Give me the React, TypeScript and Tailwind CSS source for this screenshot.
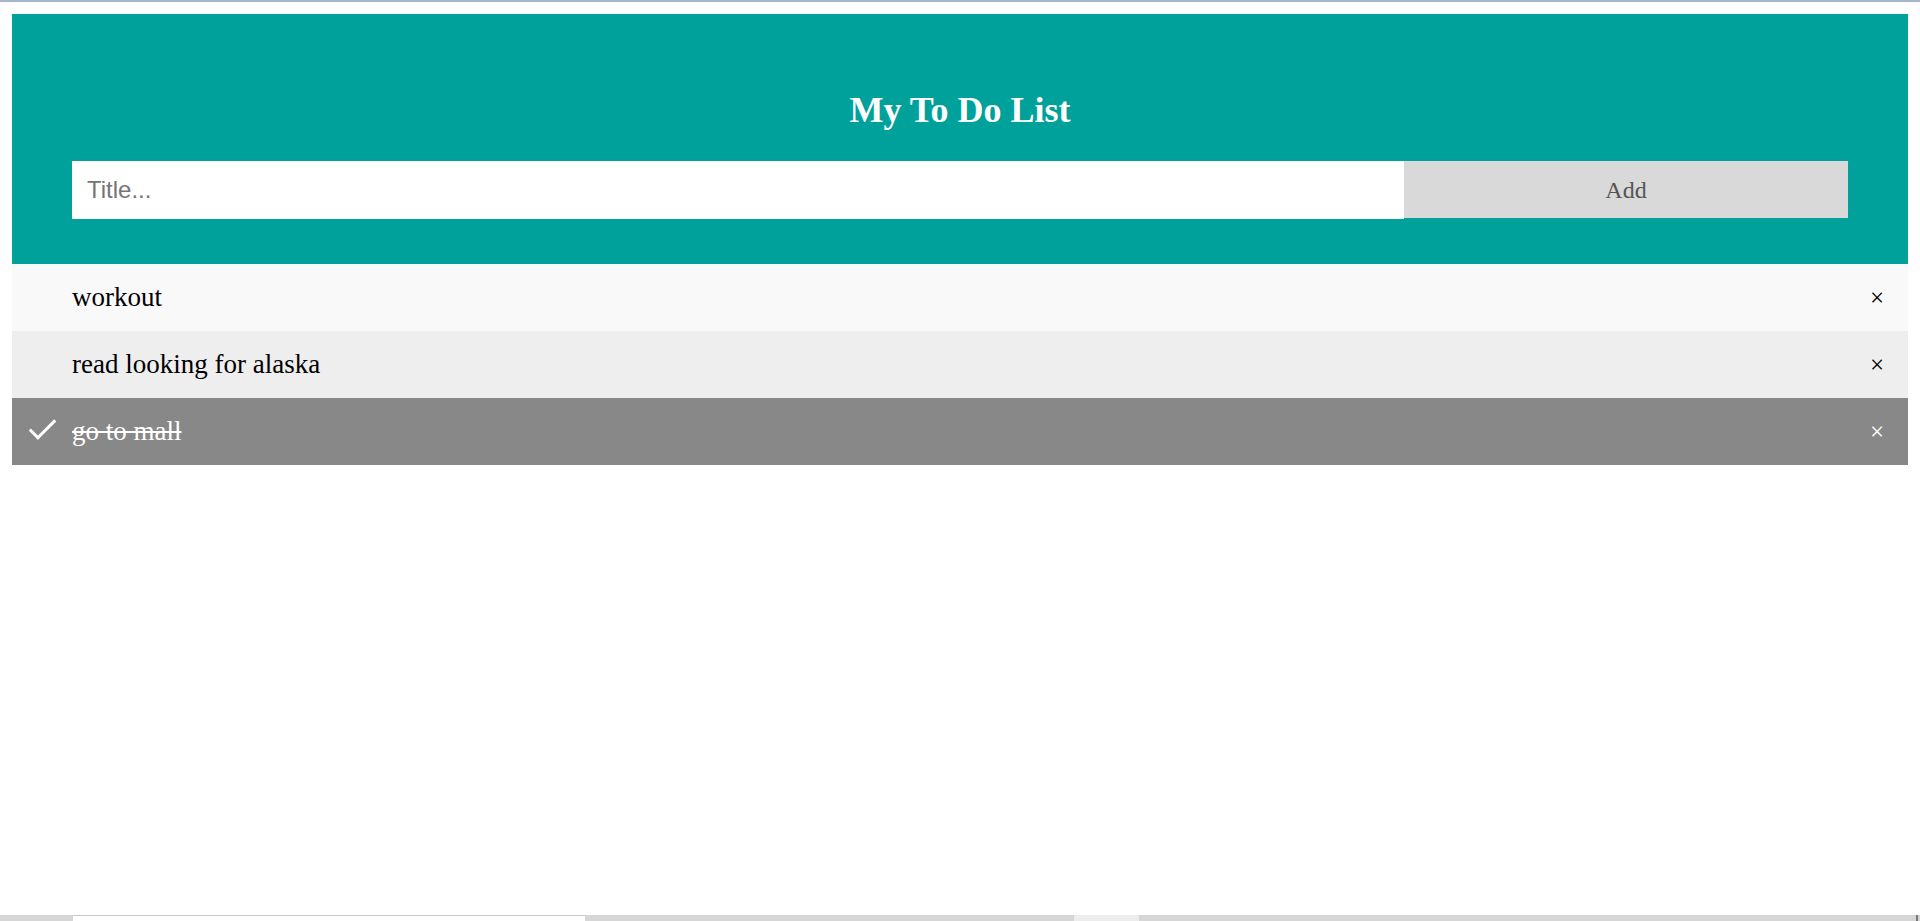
import { useState } from 'react'

type Todo = { id: number; title: string; done: boolean }

const initial: Todo[] = [
  { id: 1, title: 'workout', done: false },
  { id: 2, title: 'read looking for alaska', done: false },
  { id: 3, title: 'go to mall', done: true },
]

export default function App() {
  const [todos, setTodos] = useState<Todo[]>(initial)
  const [text, setText] = useState('')

  const add = () => {
    if (!text.trim()) return
    setTodos(t => [...t, { id: Date.now(), title: text.trim(), done: false }])
    setText('')
  }

  const toggle = (id: number) =>
    setTodos(t => t.map(x => (x.id === id ? { ...x, done: !x.done } : x)))

  const remove = (id: number) => setTodos(t => t.filter(x => x.id !== id))

  return (
    <div className="h-[921px] flex flex-col bg-white font-['Liberation_Serif',serif] overflow-hidden">
      <div className="h-[2px] bg-[#a7b4cb] shrink-0" />

      <main className="flex-1 px-[12px] pt-[12px]">
        <div className="bg-[#00a19b] px-[60px] py-[45px] text-center text-white">
          <h2 className="my-[30px] text-[36px] leading-[42px] font-bold">My To Do List</h2>
          <div className="flex items-start">
            <input
              value={text}
              onChange={e => setText(e.target.value)}
              onKeyDown={e => e.key === 'Enter' && add()}
              placeholder="Title..."
              className="w-3/4 h-[58px] px-[15px] py-[15px] bg-white text-black text-[24px] leading-[28px] font-['Liberation_Sans',sans-serif] placeholder:text-[#757575] outline-none"
            />
            <button
              onClick={add}
              className="w-1/4 h-[57px] bg-[#d9d9d9] text-[#555] text-[24px] leading-[28px] text-center font-['Liberation_Serif',serif]"
            >
              Add
            </button>
          </div>
        </div>

        <ul className="font-['Liberation_Serif',serif]">
          {todos.map((todo, i) => (
            <li
              key={todo.id}
              onClick={() => toggle(todo.id)}
              className={`relative cursor-pointer pl-[60px] pr-[12px] py-[18px] text-[27px] leading-[31px] ${
                todo.done
                  ? 'bg-[#888] text-white line-through'
                  : i % 2 === 0
                    ? 'bg-[#f9f9f9] text-black'
                    : 'bg-[#eee] text-black'
              }`}
            >
              {todo.done && (
                <span className="absolute top-[15px] left-[24px] w-[13px] h-[26px] border-r-[3px] border-b-[3px] border-white rotate-45" />
              )}
              {todo.title}
              <span
                onClick={e => {
                  e.stopPropagation()
                  remove(todo.id)
                }}
                className="absolute right-0 top-0 px-[24px] py-[18px] text-[25px] no-underline"
              >
                ×
              </span>
            </li>
          ))}
        </ul>
      </main>

      <div className="h-[6px] shrink-0 flex bg-[#d6d6d6]">
        <div className="w-[73px]" />
        <div className="w-[512px] bg-white border-t border-[#c8c8c8]" />
        <div className="w-[489px]" />
        <div className="w-[65px] bg-[#ececec]" />
        <div className="flex-1" />
        <div className="w-[2px] bg-[#777]" />
        <div className="w-[2px]" />
      </div>
    </div>
  )
}
